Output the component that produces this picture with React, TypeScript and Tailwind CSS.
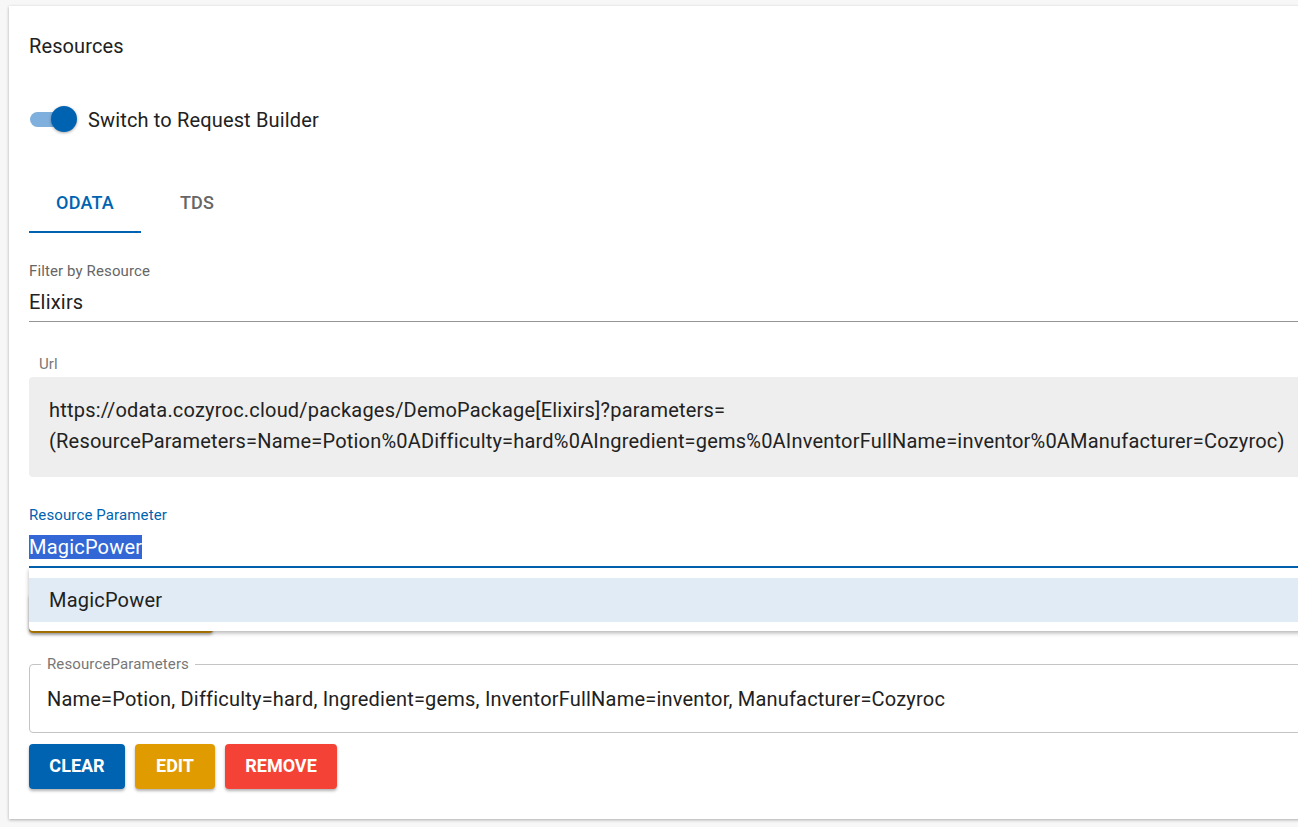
export default function App() {
  return (
    <div className="min-h-screen w-full overflow-hidden bg-[#f7f7f7] pl-[9px] pt-[6px] font-['Roboto',_'Liberation_Sans',_sans-serif] text-[#212121]">
      <div className="w-[1320px] bg-white pl-5 pt-[28px] pb-[30px] shadow-[0_1px_3px_rgba(0,0,0,0.3)]">
        <h1 className="h-6 text-[20px] leading-6 tracking-[0.1px]">Resources</h1>

        {/* switch */}
        <div className="mt-[46px] flex h-8 items-center">
          <div className="relative h-8 w-[59px]">
            <div className="absolute left-[1px] top-[8px] h-[15px] w-[38px] rounded-full bg-[#7fb0dd]" />
            <div className="absolute left-[22px] top-[2px] h-[26px] w-[26px] rounded-full bg-[#0063b1] shadow-[0_1px_3px_rgba(0,0,0,0.35)]" />
          </div>
          <span className="text-[20px] leading-6 tracking-[0.15px]">Switch to Request Builder</span>
        </div>

        {/* tabs */}
        <div className="mt-[43px] flex">
          <div className="flex w-[112px] flex-col items-center pt-3">
            <span className="text-[18px] font-medium leading-6 tracking-[0.2px] text-[#0063b1]">ODATA</span>
            <div className="mt-4 h-[2px] w-full bg-[#0063b1]" />
          </div>
          <div className="flex w-[112px] flex-col items-center pt-3">
            <span className="text-[18px] font-medium leading-6 tracking-[0.2px] text-[#666666]">TDS</span>
          </div>
        </div>

        {/* filter */}
        <div className="mt-[28px] text-[15px] leading-5 tracking-[0.12px] text-[#666666]">Filter by Resource</div>
        <div className="mt-[9px] border-b border-[#949494] pb-[7px] text-[20px] leading-6 tracking-[0.2px]">Elixirs</div>

        {/* url */}
        <div className="ml-[10px] mt-[32px] text-[15px] leading-5 tracking-[0.12px] text-[#777777]">Url</div>
        <div className="mt-[3px] rounded bg-[#eeeeee] pl-5 pt-[18px] pb-[20px] text-[20px] leading-[31px] tracking-[0.2px] text-[#222222]">
          https://odata.cozyroc.cloud/packages/DemoPackage[Elixirs]?parameters=
          <br />
          (ResourceParameters=Name=Potion%0ADifficulty=hard%0AIngredient=gems%0AInventorFullName=inventor%0AManufacturer=Cozyroc)
        </div>

        {/* resource parameter */}
        <div className="mt-[28px] text-[15px] leading-5 tracking-[0.12px] text-[#0063b1]">Resource Parameter</div>
        <div className="mt-[10px] border-b-2 border-[#0063b1] pb-[7px] text-[20px] leading-6 tracking-[0.2px]">
          <span className="bg-[#3367d6] text-white">MagicPower</span>
        </div>

        <div className="relative h-[65px]">
          <div className="absolute bottom-0 left-0 h-[40px] w-[184px] rounded bg-[#c98b00] shadow-[0_2px_3px_rgba(0,0,0,0.3)]" />
          <div className="absolute inset-x-0 top-0 h-[63px] rounded-b bg-white py-[10px] shadow-[0_2px_4px_rgba(0,0,0,0.3)]">
            <div className="flex h-[44px] items-center bg-[#e0ebf5] pl-5 text-[20px] leading-6 tracking-[0.2px]">MagicPower</div>
          </div>
        </div>

        {/* fieldset */}
        <fieldset className="mt-[21px] rounded border border-[#c4c4c4] pl-[17px] pt-[13px] pb-[21px]">
          <legend className="-ml-[6px] px-[6px] text-[15px] leading-5 tracking-[0.12px] text-[#777777]">ResourceParameters</legend>
          <div className="text-[20px] leading-6 tracking-[0.2px]">
            Name=Potion, Difficulty=hard, Ingredient=gems, InventorFullName=inventor, Manufacturer=Cozyroc
          </div>
        </fieldset>

        {/* buttons */}
        <div className="mt-[11px] flex gap-[10px]">
          <button className="h-[45px] w-[96px] rounded bg-[#0063b1] pb-[2px] text-[18px] font-bold text-white shadow-[0_2px_3px_rgba(0,0,0,0.3)]">
            CLEAR
          </button>
          <button className="h-[45px] w-[80px] rounded bg-[#e09b00] pb-[2px] text-[18px] font-bold text-white shadow-[0_2px_3px_rgba(0,0,0,0.3)]">
            EDIT
          </button>
          <button className="h-[45px] w-[112px] rounded bg-[#f44336] pb-[2px] text-[18px] font-bold text-white shadow-[0_2px_3px_rgba(0,0,0,0.3)]">
            REMOVE
          </button>
        </div>
      </div>
    </div>
  )
}
